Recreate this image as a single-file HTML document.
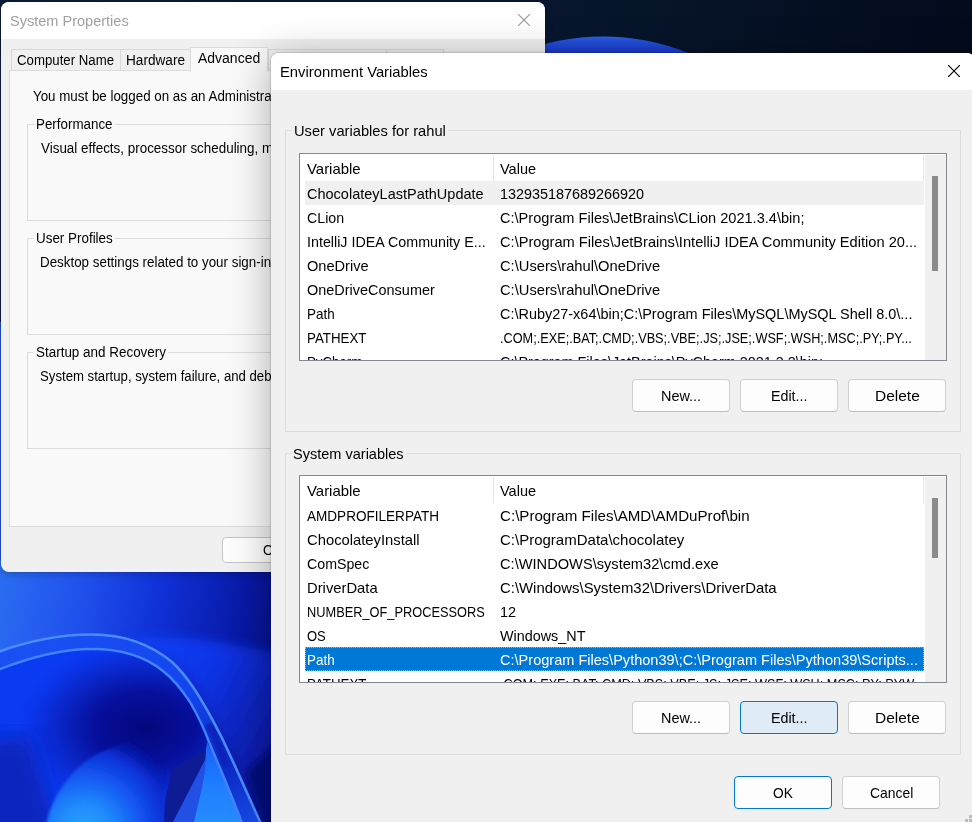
<!DOCTYPE html>
<html><head><meta charset="utf-8"><title>Environment Variables</title>
<style>
html,body{margin:0;padding:0;}
body{width:972px;height:822px;overflow:hidden;position:relative;background:#0a1b8f;font-family:"Liberation Sans",sans-serif;}
.layer{position:absolute;left:0;top:0;width:972px;height:822px;}
.a{position:absolute;box-sizing:border-box;}
.t{position:absolute;white-space:pre;transform-origin:0 50%;font-family:"Liberation Sans",sans-serif;}
/* System properties */
#sp-shadow{left:1px;top:2px;width:544px;height:570px;border-radius:8px;box-shadow:0 2px 8px rgba(0,0,0,.22),0 0 1px rgba(0,0,0,.4);}
#sp{clip-path:inset(2px 427px 250px 1px round 8px);background:#f0f0f0;}
#sp .title{left:0;top:0;width:560px;height:39px;background:#fff;}
.tab{background:#f0f0f0;border:1px solid #d9d9d9;border-bottom:none;}
.page{left:9px;top:70px;width:541px;height:457px;background:#f9f9f9;border:1px solid #dcdcdc;}
.grp{border:1px solid #dcdcdc;}
.btn{border:1px solid #d0d0d0;border-bottom-color:#bdbdbd;border-radius:4px;background:#fdfdfd;}
/* env dialog */
#ev-shadow{left:271px;top:53px;width:704px;height:790px;border-radius:8px;box-shadow:0 6px 42px rgba(0,0,0,.31),0 0 2px rgba(0,0,0,.45);}
#ev{clip-path:inset(53px -3px -10px 271px round 8px);background:#f0f0f0;}
#ev .title{left:271px;top:53px;width:720px;height:37px;background:#fff;}
.lbl{background:#f0f0f0;}
.list{background:#fff;border:1px solid #828790;}

</style></head>
<body>
<svg class="a" style="left:0;top:0" width="972" height="822" viewBox="0 0 972 822">
<defs>
<linearGradient id="gtop" x1="0" x2="1" y1="0" y2="0"><stop offset="0" stop-color="#0c1d3a"/><stop offset="0.55" stop-color="#08172f"/><stop offset="1" stop-color="#030b1c"/></linearGradient>
<linearGradient id="garc" x1="0" x2="0" y1="36" y2="60" gradientUnits="userSpaceOnUse"><stop offset="0" stop-color="#3064e8"/><stop offset="0.2" stop-color="#2452de"/><stop offset="0.7" stop-color="#1838c8"/></linearGradient>
<linearGradient id="gbl" x1="0" x2="1" y1="0" y2="0.2"><stop offset="0" stop-color="#2b6ef2"/><stop offset="0.3" stop-color="#2050ec"/><stop offset="0.55" stop-color="#1032d8"/><stop offset="0.85" stop-color="#0818a4"/><stop offset="1" stop-color="#06128c"/></linearGradient>
<radialGradient id="ginner" cx="0" cy="0" r="1" gradientUnits="userSpaceOnUse" gradientTransform="translate(145 728) scale(128 88)"><stop offset="0" stop-color="#04087c"/><stop offset="0.4" stop-color="#060f9c"/><stop offset="0.7" stop-color="#0a28cc"/><stop offset="0.9" stop-color="#0a36ec"/><stop offset="1" stop-color="#0a3af2"/></radialGradient>
<radialGradient id="gbulb" cx="84" cy="832" r="104" gradientUnits="userSpaceOnUse"><stop offset="0" stop-color="#2aa6ff"/><stop offset="0.28" stop-color="#1f88fc"/><stop offset="0.55" stop-color="#1456f2"/><stop offset="0.78" stop-color="#0a30d6"/><stop offset="1" stop-color="#0818a8" stop-opacity="0"/></radialGradient>
<linearGradient id="gpetal" x1="0" x2="0" y1="742" y2="822" gradientUnits="userSpaceOnUse"><stop offset="0" stop-color="#1a5cf8"/><stop offset="0.5" stop-color="#1f7cff"/><stop offset="1" stop-color="#268cff"/></linearGradient>
<linearGradient id="gband" x1="0" x2="1" y1="0" y2="1"><stop offset="0" stop-color="#1a52f4"/><stop offset="0.5" stop-color="#1444ee"/><stop offset="0.8" stop-color="#0c2cc8"/><stop offset="1" stop-color="#1a50f0"/></linearGradient>
<linearGradient id="gout" x1="0" x2="1" y1="0" y2="0.6"><stop offset="0" stop-color="#0a44f8"/><stop offset="0.4" stop-color="#0a36ea"/><stop offset="1" stop-color="#061290"/></linearGradient>
<filter id="b2"><feGaussianBlur stdDeviation="1.6"/></filter>
<filter id="b3"><feGaussianBlur stdDeviation="3"/></filter>
<filter id="b6"><feGaussianBlur stdDeviation="6"/></filter>
<filter id="b10"><feGaussianBlur stdDeviation="10"/></filter>
<filter id="b1"><feGaussianBlur stdDeviation="0.7"/></filter>
<clipPath id="cbl"><rect x="0" y="560" width="290" height="262"/></clipPath>
</defs>
<rect width="972" height="822" fill="#0a1ec0"/>
<rect width="972" height="80" fill="url(#gtop)"/>
<circle cx="603" cy="263.5" r="227" fill="url(#garc)"/>
<rect x="0" y="56" width="12" height="268" fill="#121d40"/><rect x="0" y="322" width="12" height="260" fill="#2552d8"/>
<g clip-path="url(#cbl)">
<rect x="0" y="560" width="290" height="262" fill="url(#gbl)"/>
<!-- outer petal region (right of outer curve) -->
<path d="M120 640 C160 632 230 640 300 660 L300 830 L262 830 C242 785 221 736 199 693 C185 668 160 648 120 640Z" fill="url(#gout)" filter="url(#b6)"/>
<!-- band between curves -->
<path d="M-5 653 C30 640 60 634.5 92 634.5 C130 634.5 155 648 172 662 C186 675 199 693 221 736 C235 765 250 800 262 826 L243 826 C238 812 232 797 227 785 C221 770 215 756 209 742 C204 728 198 716 190 702 C182 690 172 678 163 671 C152 662 132 649 92 649 C60 649 30 657 -5 671Z" fill="url(#gband)"/>
<!-- inner region -->
<path d="M-5 671 C30 657 60 649 92 649 C132 649 152 662 163 671 C172 678 182 690 190 702 C198 716 204 728 209 742 C215 756 221 770 227 785 C232 797 238 812 243 826 L-5 826Z" fill="url(#ginner)"/>
<!-- left light falloff in inner region -->
<path d="M-20 740 L30 735 C40 770 50 800 60 840 L-20 840Z" fill="#0822b4" filter="url(#b10)" opacity="0.85"/>
<!-- bulb -->
<path d="M46 826 C50 805 58 790 73 773 C85 760 100 751 112 748 C128 742 145 735 160 730 C166 750 163 775 165 804 L168 826Z" fill="url(#gbulb)" filter="url(#b2)"/>
<!-- dark fold -->
<path d="M172.500 768 L206 749 L206 758 L171 826 L164 826 L165 801Z" fill="#0a1a94" filter="url(#b1)"/>
<!-- sliver -->
<path d="M171 826 L206 758 L205 770 L202 787 L193 826Z" fill="#2450e4" filter="url(#b1)"/>
<!-- bright petal -->
<path d="M207 742 C215 756 221 770 227 785 C232 797 238 812 243 826 L193 826 L202 787 L205 770 L206 749Z" fill="url(#gpetal)" filter="url(#b1)"/>
<!-- band shade -->
<path d="M213 722 C220 735 226 750 230 766 L222 766 C218 752 212 738 205 726Z" fill="#0a1cb0" opacity="0.75" filter="url(#b2)"/>
<!-- right dark wedge -->
<path d="M285 735 L246 772 L266 830 L285 830Z" fill="#050c7c" filter="url(#b3)"/>
<!-- highlight curves -->
<path d="M-5 653 C30 640 60 634.5 92 634.5 C130 634.5 155 648 172 662 C186 675 199 693 221 736 C235 765 250 800 262 826" fill="none" stroke="#4a8cff" stroke-width="2.6" filter="url(#b1)"/>
<path d="M-5 671 C30 657 60 649 92 649 C132 649 152 662 163 671 C172 678 182 690 190 702 C198 716 204 728 209 742 C215 756 221 770 227 785 C232 797 238 812 243 826" fill="none" stroke="#4284ff" stroke-width="2.4" filter="url(#b1)"/>
</g>
</svg>

<div class="a" id="sp-shadow"></div>
<div class="layer" id="sp">
  <div class="a title"></div>
  <svg class="a" style="left:518px;top:14px" width="12" height="12" viewBox="0 0 12 12"><path d="M0.3 0.3L11.7 11.7M11.7 0.3L0.3 11.7" stroke="#9a9a9a" stroke-width="1.1" fill="none" stroke-linecap="round"/></svg>
  <!-- tabs -->
  <div class="a tab" style="left:11px;top:49px;width:110px;height:22px"></div>
  <div class="a tab" style="left:120px;top:49px;width:72px;height:22px"></div>
  <div class="a tab" style="left:268px;top:49px;width:119px;height:22px"></div>
  <div class="a tab" style="left:386px;top:49px;width:58px;height:22px"></div>
  <div class="a page"></div>
  <div class="a tab" style="left:190px;top:47px;width:78px;height:25px;background:#f9f9f9;border-color:#dcdcdc"></div>
  <!-- group boxes -->
  <div class="a grp" style="left:27px;top:124px;width:500px;height:97px"></div>
  <div class="a grp" style="left:27px;top:238px;width:500px;height:97px"></div>
  <div class="a grp" style="left:27px;top:352px;width:500px;height:97px"></div>
  <div class="a" style="left:34px;top:118px;width:81px;height:14px;background:#f9f9f9"></div>
  <div class="a" style="left:34px;top:232px;width:81px;height:14px;background:#f9f9f9"></div>
  <div class="a" style="left:34px;top:346px;width:134px;height:14px;background:#f9f9f9"></div>
  <div class="a btn" style="left:222px;top:537px;width:92px;height:26px;border-color:#c4c4c4"></div>
  <span class="t" style="left:9.70px;top:12px;font-size:15px;line-height:18px;color:#a0a0a0;transform:scaleX(0.9685);">System Properties</span>
<span class="t" style="left:17.30px;top:52px;font-size:14px;line-height:17px;color:#000;transform:scaleX(0.9445);">Computer Name</span>
<span class="t" style="left:126.23px;top:52px;font-size:14px;line-height:17px;color:#000;transform:scaleX(0.9732);">Hardware</span>
<span class="t" style="left:198.30px;top:50px;font-size:14px;line-height:17px;color:#000;transform:scaleX(0.9987);">Advanced</span>
<span class="t" style="left:276.00px;top:52px;font-size:14px;line-height:17px;color:#000;transform:scaleX(0.9579);">System Protection</span>
<span class="t" style="left:393.04px;top:52px;font-size:14px;line-height:17px;color:#000;transform:scaleX(0.9579);">Remote</span>
<span class="t" style="left:33.00px;top:88px;font-size:14px;line-height:17px;color:#000;transform:scaleX(0.9539);">You must be logged on as an Administrator to make most of these changes.</span>
<span class="t" style="left:35.74px;top:116px;font-size:14px;line-height:17px;color:#000;transform:scaleX(0.9552);">Performance</span>
<span class="t" style="left:41.00px;top:140px;font-size:14px;line-height:17px;color:#000;transform:scaleX(0.9582);">Visual effects, processor scheduling, memory usage, and virtual memory</span>
<span class="t" style="left:35.74px;top:230px;font-size:14px;line-height:17px;color:#000;transform:scaleX(0.9579);">User Profiles</span>
<span class="t" style="left:40.25px;top:254px;font-size:14px;line-height:17px;color:#000;transform:scaleX(0.9549);">Desktop settings related to your sign-in</span>
<span class="t" style="left:35.50px;top:344px;font-size:14px;line-height:17px;color:#000;transform:scaleX(0.9601);">Startup and Recovery</span>
<span class="t" style="left:40.00px;top:368px;font-size:14px;line-height:17px;color:#000;transform:scaleX(0.9416);">System startup, system failure, and debugging information</span>
<span class="t" style="left:262.50px;top:542px;font-size:14px;line-height:17px;color:#000;transform:scaleX(0.9579);">OK</span>
</div>
<div class="a" id="ev-shadow"></div>
<div class="layer" id="ev">
  <div class="a title"></div>
  <svg class="a" style="left:948px;top:65px" width="12" height="12" viewBox="0 0 12 12"><path d="M0.3 0.3L11.7 11.7M11.7 0.3L0.3 11.7" stroke="#000" stroke-width="1.2" fill="none" stroke-linecap="round"/></svg>
  <!-- group 1 -->
  <div class="a grp" style="left:285px;top:130px;width:676px;height:302px"></div>
  <div class="a lbl" style="left:292px;top:122px;width:156px;height:16px"></div>
  <div class="a list" style="left:299px;top:153px;width:648px;height:208px"></div>
  <!-- group 2 -->
  <div class="a grp" style="left:285px;top:453px;width:676px;height:302px"></div>
  <div class="a lbl" style="left:292px;top:445px;width:114px;height:16px"></div>
  <div class="a list" style="left:299px;top:475px;width:648px;height:208px"></div>
  <!-- buttons -->
  <div class="a btn" style="left:632px;top:379px;width:98px;height:33px"></div>
  <div class="a btn" style="left:740px;top:379px;width:98px;height:33px"></div>
  <div class="a btn" style="left:848px;top:379px;width:98px;height:33px"></div>
  <div class="a btn" style="left:632px;top:701px;width:98px;height:33px"></div>
  <div class="a btn" style="left:740px;top:701px;width:98px;height:33px;background:#dfebf6;border-color:#0078d4"></div>
  <div class="a btn" style="left:848px;top:701px;width:98px;height:33px"></div>
  <div class="a btn" style="left:734px;top:776px;width:98px;height:33px;border-color:#0078d4"></div>
  <div class="a btn" style="left:842px;top:776px;width:98px;height:33px"></div>
  <span class="t" style="left:279.81px;top:63px;font-size:15px;line-height:18px;color:#000;transform:scaleX(0.9859);">Environment Variables</span>
<span class="t" style="left:293.82px;top:122px;font-size:15px;line-height:18px;color:#000;transform:scaleX(0.9790);">User variables for rahul</span>
<span class="t" style="left:293.40px;top:445px;font-size:15px;line-height:18px;color:#000;transform:scaleX(0.9683);">System variables</span>
<span class="t" style="left:660.84px;top:387px;font-size:15px;line-height:18px;color:#000;transform:scaleX(0.9617);">New...</span>
<span class="t" style="left:770.65px;top:387px;font-size:15px;line-height:18px;color:#000;transform:scaleX(0.9507);">Edit...</span>
<span class="t" style="left:874.57px;top:387px;font-size:15px;line-height:18px;color:#000;transform:scaleX(1.0329);">Delete</span>
<span class="t" style="left:660.84px;top:709px;font-size:15px;line-height:18px;color:#000;transform:scaleX(0.9617);">New...</span>
<span class="t" style="left:770.65px;top:709px;font-size:15px;line-height:18px;color:#000;transform:scaleX(0.9507);">Edit...</span>
<span class="t" style="left:874.57px;top:709px;font-size:15px;line-height:18px;color:#000;transform:scaleX(1.0329);">Delete</span>
<span class="t" style="left:773.10px;top:784px;font-size:15px;line-height:18px;color:#000;transform:scaleX(0.9138);">OK</span>
<span class="t" style="left:869.50px;top:784px;font-size:15px;line-height:18px;color:#000;transform:scaleX(0.9275);">Cancel</span>
  <!-- resize grip -->
  <div class="a" style="left:969px;top:815px;width:3px;height:3px;background:#bcbcbc"></div><div class="a" style="left:965px;top:819px;width:3px;height:3px;background:#bcbcbc"></div><div class="a" style="left:969px;top:819px;width:3px;height:3px;background:#bcbcbc"></div>
</div>
<!-- list 1 contents -->
<div class="layer" id="l1" style="clip-path:inset(154px 26px 462px 300px)">
  <div class="a" style="left:305px;top:181px;width:619px;height:24px;background:#f0f0f0"></div>
  <div class="a" style="left:493px;top:155px;width:1px;height:26px;background:#e5e5e5"></div>
  <div class="a" style="left:923px;top:155px;width:1px;height:26px;background:#e5e5e5"></div>
  <div class="a" style="left:925px;top:155px;width:21px;height:210px;background:#f0f0f0"></div>
  <div class="a" style="left:932px;top:176px;width:6px;height:95px;background:#8b8b8b"></div>
  <span class="t" style="left:307.20px;top:160px;font-size:15px;line-height:18px;color:#000;transform:scaleX(0.9948);">Variable</span>
<span class="t" style="left:500.20px;top:160px;font-size:15px;line-height:18px;color:#000;transform:scaleX(0.9700);">Value</span>
<span class="t" style="left:307.20px;top:185px;font-size:15px;line-height:18px;color:#000;transform:scaleX(0.9672);">ChocolateyLastPathUpdate</span>
<span class="t" style="left:500.20px;top:185px;font-size:15px;line-height:18px;color:#000;transform:scaleX(0.9598);">132935187689266920</span>
<span class="t" style="left:307.20px;top:209px;font-size:15px;line-height:18px;color:#000;transform:scaleX(0.9472);">CLion</span>
<span class="t" style="left:500.20px;top:209px;font-size:15px;line-height:18px;color:#000;transform:scaleX(0.9711);">C:\Program Files\JetBrains\CLion 2021.3.4\bin;</span>
<span class="t" style="left:307.20px;top:233px;font-size:15px;line-height:18px;color:#000;transform:scaleX(0.9524);">IntelliJ IDEA Community E...</span>
<span class="t" style="left:500.20px;top:233px;font-size:15px;line-height:18px;color:#000;transform:scaleX(0.9754);">C:\Program Files\JetBrains\IntelliJ IDEA Community Edition 20...</span>
<span class="t" style="left:307.20px;top:257px;font-size:15px;line-height:18px;color:#000;transform:scaleX(0.9728);">OneDrive</span>
<span class="t" style="left:500.20px;top:257px;font-size:15px;line-height:18px;color:#000;transform:scaleX(0.9801);">C:\Users\rahul\OneDrive</span>
<span class="t" style="left:307.20px;top:281px;font-size:15px;line-height:18px;color:#000;transform:scaleX(0.9642);">OneDriveConsumer</span>
<span class="t" style="left:500.20px;top:281px;font-size:15px;line-height:18px;color:#000;transform:scaleX(0.9801);">C:\Users\rahul\OneDrive</span>
<span class="t" style="left:307.20px;top:305px;font-size:15px;line-height:18px;color:#000;transform:scaleX(0.8947);">Path</span>
<span class="t" style="left:500.20px;top:305px;font-size:15px;line-height:18px;color:#000;transform:scaleX(0.9637);">C:\Ruby27-x64\bin;C:\Program Files\MySQL\MySQL Shell 8.0\...</span>
<span class="t" style="left:307.20px;top:329px;font-size:15px;line-height:18px;color:#000;transform:scaleX(0.8879);">PATHEXT</span>
<span class="t" style="left:500.20px;top:329px;font-size:15px;line-height:18px;color:#000;transform:scaleX(0.8472);">.COM;.EXE;.BAT;.CMD;.VBS;.VBE;.JS;.JSE;.WSF;.WSH;.MSC;.PY;.PY...</span>
<span class="t" style="left:307.20px;top:353px;font-size:15px;line-height:18px;color:#000;transform:scaleX(0.8836);">PyCharm</span>
<span class="t" style="left:500.20px;top:353px;font-size:15px;line-height:18px;color:#000;transform:scaleX(0.9588);">C:\Program Files\JetBrains\PyCharm 2021.3.2\bin;</span>
</div>
<div class="layer" id="l2" style="clip-path:inset(476px 26px 140px 300px)">
  <div class="a" style="left:305px;top:647px;width:619px;height:24px;background:#0078d7;border:1px dotted #ffa040"></div>
  <div class="a" style="left:493px;top:477px;width:1px;height:26px;background:#e5e5e5"></div>
  <div class="a" style="left:923px;top:477px;width:1px;height:26px;background:#e5e5e5"></div>
  <div class="a" style="left:925px;top:477px;width:21px;height:210px;background:#f0f0f0"></div>
  <div class="a" style="left:932px;top:498px;width:6px;height:60px;background:#8b8b8b"></div>
  <span class="t" style="left:307.20px;top:482px;font-size:15px;line-height:18px;color:#000;transform:scaleX(0.9948);">Variable</span>
<span class="t" style="left:500.20px;top:482px;font-size:15px;line-height:18px;color:#000;transform:scaleX(0.9700);">Value</span>
<span class="t" style="left:307.20px;top:507px;font-size:15px;line-height:18px;color:#000;transform:scaleX(0.9037);">AMDPROFILERPATH</span>
<span class="t" style="left:500.20px;top:507px;font-size:15px;line-height:18px;color:#000;transform:scaleX(1.0084);">C:\Program Files\AMD\AMDuProf\bin</span>
<span class="t" style="left:307.20px;top:531px;font-size:15px;line-height:18px;color:#000;transform:scaleX(0.9860);">ChocolateyInstall</span>
<span class="t" style="left:500.20px;top:531px;font-size:15px;line-height:18px;color:#000;transform:scaleX(1.0003);">C:\ProgramData\chocolatey</span>
<span class="t" style="left:307.20px;top:555px;font-size:15px;line-height:18px;color:#000;transform:scaleX(0.9464);">ComSpec</span>
<span class="t" style="left:500.20px;top:555px;font-size:15px;line-height:18px;color:#000;transform:scaleX(0.9752);">C:\WINDOWS\system32\cmd.exe</span>
<span class="t" style="left:307.20px;top:579px;font-size:15px;line-height:18px;color:#000;transform:scaleX(0.9856);">DriverData</span>
<span class="t" style="left:500.20px;top:579px;font-size:15px;line-height:18px;color:#000;transform:scaleX(0.9937);">C:\Windows\System32\Drivers\DriverData</span>
<span class="t" style="left:307.20px;top:603px;font-size:15px;line-height:18px;color:#000;transform:scaleX(0.8533);">NUMBER_OF_PROCESSORS</span>
<span class="t" style="left:500.20px;top:603px;font-size:15px;line-height:18px;color:#000;transform:scaleX(0.9668);">12</span>
<span class="t" style="left:307.20px;top:627px;font-size:15px;line-height:18px;color:#000;transform:scaleX(0.8677);">OS</span>
<span class="t" style="left:500.20px;top:627px;font-size:15px;line-height:18px;color:#000;transform:scaleX(0.9582);">Windows_NT</span>
<span class="t" style="left:307.20px;top:651px;font-size:15px;line-height:18px;color:#fff;transform:scaleX(0.8947);">Path</span>
<span class="t" style="left:500.20px;top:651px;font-size:15px;line-height:18px;color:#fff;transform:scaleX(0.9697);">C:\Program Files\Python39\;C:\Program Files\Python39\Scripts...</span>
<span class="t" style="left:307.20px;top:675px;font-size:15px;line-height:18px;color:#000;transform:scaleX(0.8879);">PATHEXT</span>
<span class="t" style="left:500.20px;top:675px;font-size:15px;line-height:18px;color:#000;transform:scaleX(0.8457);">.COM;.EXE;.BAT;.CMD;.VBS;.VBE;.JS;.JSE;.WSF;.WSH;.MSC;.PY;.PYW</span>
</div>

</body></html>
